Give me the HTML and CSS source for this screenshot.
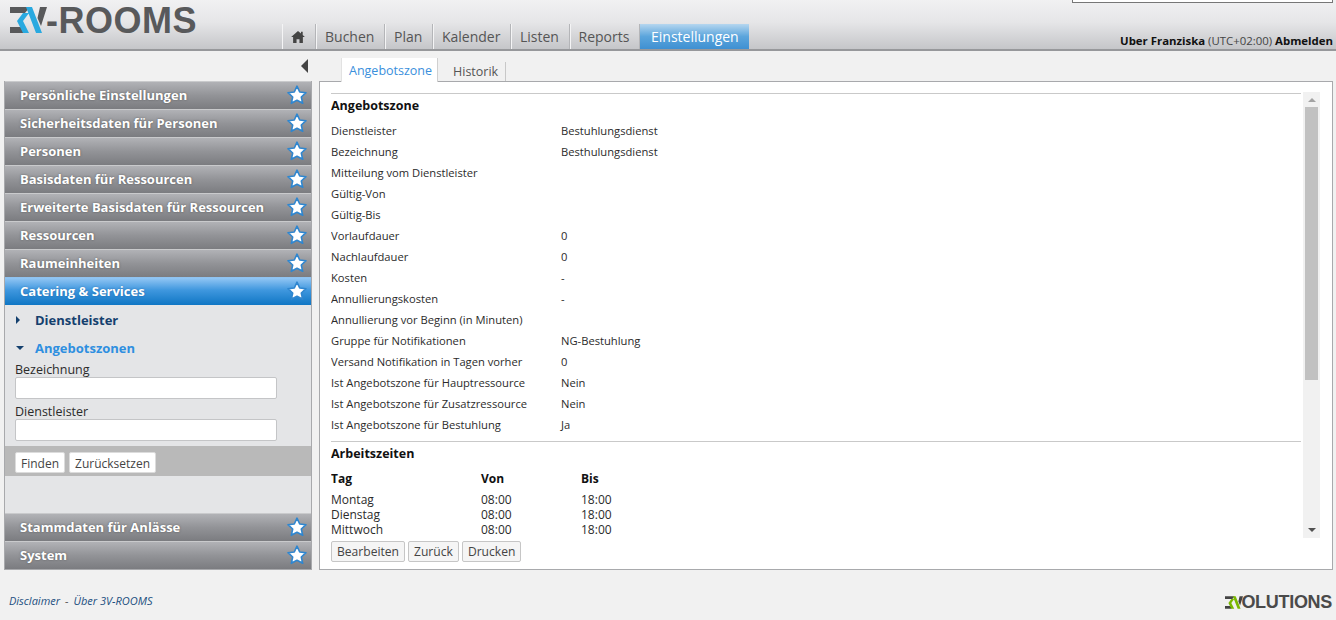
FILE: index.html
```html
<!DOCTYPE html>
<html lang="de">
<head>
    <meta charset="UTF-8">
    <title>3V-ROOMS</title>
    <link rel="stylesheet" href="styles.css">
</head>
<body>
    <svg class="svg-defs" width="0" height="0">
        <symbol id="star" viewBox="0 0 20 20">
            <path d="M10 1.200l2.700 5.800 6.300.7-4.700 4.300 1.400 6.300L10 15.200l-5.700 3.100 1.400-6.300L1 7.700l6.300-.7z" fill="#fff" stroke="#2f86cf" stroke-width="1.600" stroke-linejoin="round"/>
        </symbol>
    </svg>

    <header class="top-bar">
        <div class="logo">
            <svg class="logo-mark" viewBox="0 0 37 26" width="37" height="26">
                <path d="M0 0h20l-5 6H0zM0 20h11l3 6H0zM30 0h7l-6 19-3.500-8z" fill="#58595b"/>
                <path d="M13 6h6l-6 8 6 12h-6L7 14zM16 0h6l10 26h-6z" fill="#29a9e0"/>
            </svg>
            <span class="logo-text">-ROOMS</span>
        </div>
        <nav class="main-nav">
            <a class="nav-tab nav-home">
                <svg viewBox="0 0 16 14" width="14" height="12"><path d="M8 0L0 7h2.300v7h4V9.500h3.400V14h4V7H16l-2.500-2.200V1h-2v2z" fill="#444"/></svg>
            </a>
            <a class="nav-tab">Buchen</a>
            <a class="nav-tab">Plan</a>
            <a class="nav-tab">Kalender</a>
            <a class="nav-tab">Listen</a>
            <a class="nav-tab">Reports</a>
            <a class="nav-tab nav-active">Einstellungen</a>
        </nav>
        <div class="top-right">
            <div class="search-box"></div>
            <div class="user-line"><b>Uber Franziska</b> (UTC+02:00) <b>Abmelden</b></div>
        </div>
    </header>

    <div class="page">
        <aside class="sidebar-wrap">
            <div class="collapse-row"><span class="collapse-arrow"></span></div>
            <div class="sidebar">
                <div class="acc-head">Persönliche Einstellungen<svg class="star"><use href="#star"/></svg></div>
                <div class="acc-head">Sicherheitsdaten für Personen<svg class="star"><use href="#star"/></svg></div>
                <div class="acc-head">Personen<svg class="star"><use href="#star"/></svg></div>
                <div class="acc-head">Basisdaten für Ressourcen<svg class="star"><use href="#star"/></svg></div>
                <div class="acc-head">Erweiterte Basisdaten für Ressourcen<svg class="star"><use href="#star"/></svg></div>
                <div class="acc-head">Ressourcen<svg class="star"><use href="#star"/></svg></div>
                <div class="acc-head">Raumeinheiten<svg class="star"><use href="#star"/></svg></div>
                <div class="acc-head acc-open">Catering &amp; Services<svg class="star"><use href="#star"/></svg></div>
                <div class="acc-body">
                    <div class="sub-head sub-first"><span class="tri-right"></span>Dienstleister</div>
                    <div class="sub-head sub-open"><span class="tri-down"></span>Angebotszonen</div>
                    <div class="filter">
                        <label class="filter-label">Bezeichnung</label>
                        <input class="filter-input" type="text">
                        <label class="filter-label">Dienstleister</label>
                        <input class="filter-input" type="text">
                    </div>
                    <div class="filter-actions">
                        <button class="btn btn-flat">Finden</button>
                        <button class="btn btn-flat">Zurücksetzen</button>
                    </div>
                </div>
                <div class="acc-head">Stammdaten für Anlässe<svg class="star"><use href="#star"/></svg></div>
                <div class="acc-head">System<svg class="star"><use href="#star"/></svg></div>
            </div>
        </aside>

        <main class="content">
            <div class="sub-tabs">
                <a class="sub-tab sub-tab-active">Angebotszone</a>
                <a class="sub-tab">Historik</a>
            </div>
            <div class="panel">
                <div class="panel-scroll">
                    <div class="scroll-content">
                        <h2 class="section-title">Angebotszone</h2>
                        <div class="row"><span class="key">Dienstleister</span><span>Bestuhlungsdienst</span></div>
                        <div class="row"><span class="key">Bezeichnung</span><span>Besthulungsdienst</span></div>
                        <div class="row"><span class="key">Mitteilung vom Dienstleister</span></div>
                        <div class="row"><span class="key">Gültig-Von</span></div>
                        <div class="row"><span class="key">Gültig-Bis</span></div>
                        <div class="row"><span class="key">Vorlaufdauer</span><span>0</span></div>
                        <div class="row"><span class="key">Nachlaufdauer</span><span>0</span></div>
                        <div class="row"><span class="key">Kosten</span><span>-</span></div>
                        <div class="row"><span class="key">Annullierungskosten</span><span>-</span></div>
                        <div class="row"><span class="key">Annullierung vor Beginn (in Minuten)</span></div>
                        <div class="row"><span class="key">Gruppe für Notifikationen</span><span>NG-Bestuhlung</span></div>
                        <div class="row"><span class="key">Versand Notifikation in Tagen vorher</span><span>0</span></div>
                        <div class="row"><span class="key">Ist Angebotszone für Hauptressource</span><span>Nein</span></div>
                        <div class="row"><span class="key">Ist Angebotszone für Zusatzressource</span><span>Nein</span></div>
                        <div class="row"><span class="key">Ist Angebotszone für Bestuhlung</span><span>Ja</span></div>
                        <h2 class="section-title section-second">Arbeitszeiten</h2>
                        <div class="hours hours-head"><span>Tag</span><span>Von</span><span>Bis</span></div>
                        <div class="hours"><span>Montag</span><span>08:00</span><span>18:00</span></div>
                        <div class="hours"><span>Dienstag</span><span>08:00</span><span>18:00</span></div>
                        <div class="hours"><span>Mittwoch</span><span>08:00</span><span>18:00</span></div>
                    </div>
                    <div class="scrollbar">
                        <span class="arrow-up"></span>
                        <div class="scroll-track"><div class="scroll-thumb"></div></div>
                        <span class="arrow-down"></span>
                    </div>
                </div>
                <div class="panel-actions">
                    <button class="btn">Bearbeiten</button>
                    <button class="btn">Zurück</button>
                    <button class="btn">Drucken</button>
                </div>
            </div>
        </main>
    </div>

    <footer class="footer">
        <div class="footer-links"><a>Disclaimer</a><span class="sep">-</span><a>Über 3V-ROOMS</a></div>
        <div class="brand">
            <svg class="brand-mark" viewBox="0 0 37 26" width="18" height="13">
                <path d="M0 0h20l-5 6H0zM0 20h11l3 6H0zM30 0h7l-6 19-3.500-8z" fill="#444"/>
                <path d="M13 6h6l-6 8 6 12h-6L7 14zM16 0h6l10 26h-6z" fill="#7ab800"/>
            </svg>
            <span class="brand-text">OLUTIONS</span>
        </div>
    </footer>
</body>
</html>
```

FILE: styles.css
```css
* {
    box-sizing: border-box;
}
body {
    margin: 0;
    height: 620px;
    overflow: hidden;
    background-color: #f1f1f1;
    font-family: "Open Sans", "Noto Sans", sans-serif;
    font-size: 11px;
    color: #2b2b2b;
}
.svg-defs {
    display: block;
    height: 0;
}

/* Kopfzeile */
.top-bar {
    display: flex;
    height: 51px;
    background: linear-gradient(#f1f1f2, #e6e6e8 45%, #c5c6c9);
    border-bottom: 2px solid #97989b;
}
.logo {
    display: flex;
    align-items: flex-start;
    width: 282px;
    height: 49px;
    padding-left: 10px;
}
.logo-mark {
    flex: none;
    margin-top: 7px;
}
.logo-text {
    font-family: "Liberation Sans", sans-serif;
    font-weight: 700;
    font-size: 36px;
    line-height: 41px;
    letter-spacing: 0.5px;
    color: #58595b;
    margin-left: -1px;
}
.main-nav {
    display: flex;
    align-self: flex-end;
    height: 25px;
}
.nav-tab {
    display: flex;
    align-items: center;
    height: 25px;
    padding: 0 9.600px 0 8px;
    font-size: 14px;
    color: #555;
    border-left: 1px solid #f4f4f5;
    border-right: 1px solid #b4b5b8;
}
.nav-home {
    padding: 0 8px;
    width: 34px;
}
.nav-active {
    color: #fff;
    border: 0;
    padding: 0 10px 0 11px;
    background: linear-gradient(#b5d6ef, #5ba5dc 50%, #3f90d2);
}
.top-right {
    flex: 1;
    display: flex;
    flex-direction: column;
    align-items: flex-end;
    justify-content: space-between;
}
.search-box {
    width: 261px;
    height: 3px;
    margin-right: 3px;
    background-color: #fff;
    border: 1px solid #777;
    border-top: 0;
}
.user-line {
    padding-right: 3px;
    margin-bottom: 1px;
    font-size: 11.400px;
    color: #444;
}
.user-line b {
    color: #111;
}

/* Seitenlayout */
.page {
    display: flex;
    height: 519px;
}
.sidebar-wrap {
    width: 319px;
    padding-left: 4px;
}
.collapse-row {
    display: flex;
    justify-content: flex-end;
    align-items: center;
    height: 30px;
    padding-right: 11px;
}
.collapse-arrow {
    border-style: solid;
    border-width: 7px 7px 7px 0;
    border-color: transparent #444 transparent transparent;
}
.sidebar {
    width: 308px;
    height: 489px;
    border: 1px solid #a8a9ac;
    border-top: 0;
    display: flex;
    flex-direction: column;
}
.acc-head {
    display: flex;
    align-items: center;
    justify-content: space-between;
    flex: none;
    height: 28px;
    padding: 0 4px 2px 15px;
    font-size: 13px;
    font-weight: 700;
    color: #fff;
    background: linear-gradient(#b1b2b6, #929397 50%, #7b7c80);
    border-top: 1px solid #c9cacc;
    text-shadow: 0 0 2px rgba(60, 60, 60, 0.7);
}
.acc-open {
    background: linear-gradient(#92c6f4, #3f97de 45%, #0f76c4);
    border-top-color: #8fc2ef;
    text-shadow: 0 0 2px rgba(20, 80, 140, 0.6);
}
.star {
    width: 20px;
    height: 20px;
    flex: none;
}
.acc-body {
    flex: 1;
    display: flex;
    flex-direction: column;
    background-color: #e4e5e7;
}
.sub-head {
    display: flex;
    align-items: center;
    height: 28px;
    padding-left: 11px;
    font-size: 13px;
    font-weight: 700;
    color: #14406e;
}
.sub-first {
    margin-top: 1px;
}
.sub-open {
    color: #2e8fe0;
}
.tri-right {
    width: 5px;
    margin-right: 14px;
    border-style: solid;
    border-width: 4px 0 4px 4px;
    border-color: transparent transparent transparent #14406e;
}
.tri-down {
    margin-right: 11px;
    border-style: solid;
    border-width: 4px 4px 0;
    border-color: #14406e transparent transparent;
}
.filter {
    padding: 0 10px;
}
.filter-label {
    display: block;
    font-size: 12.500px;
    line-height: 15px;
    height: 15px;
}
.filter-input {
    display: block;
    width: 262px;
    height: 22px;
    margin: 0 0 5px;
    background-color: #fff;
    border: 1px solid #c4c5c7;
    border-radius: 2px;
}
.filter-input:last-child {
    margin-bottom: 0;
}
.filter-actions {
    display: flex;
    gap: 4px;
    height: 30px;
    margin-top: 5px;
    padding: 6px 10px 0;
    background-color: #b9b9b9;
}
.btn {
    height: 21px;
    padding: 0 5px;
    font-family: inherit;
    font-size: 12.100px;
    color: #444;
    background-color: #f5f5f5;
    border: 1px solid #c6c6c6;
    border-radius: 2px;
}
.btn-flat {
    padding-top: 1px;
    font-size: 12px;
    background-color: #fff;
    border-color: #dcdcdc;
}

/* Inhalt */
.content {
    width: 1014px;
}
.sub-tabs {
    display: flex;
    align-items: flex-end;
    height: 30px;
    padding-left: 22px;
}
.sub-tab {
    display: flex;
    align-items: center;
    height: 19px;
    padding: 0 7px;
    font-size: 12.500px;
    color: #555;
    border-right: 1px solid #c8c8c8;
}
.sub-tab-active {
    height: 24px;
    margin-bottom: -1px;
    position: relative;
    color: #3a8fdc;
    background-color: #fff;
    border-left: 1px solid #e2e2e2;
    border-right: 1px solid #d0d0d0;
    padding-right: 5px;
    margin-right: 8px;
}
.panel {
    height: 489px;
    padding: 10px 12px 8px 11px;
    background-color: #fff;
    border: 1px solid #a8a9ac;
}
.panel-scroll {
    display: flex;
    gap: 2px;
    height: 446px;
}
.scroll-content {
    flex: 1;
    overflow: hidden;
    margin-top: 1px;
    border-top: 1px solid #c9c9c9;
    min-width: 0;
}
.section-title {
    margin: 0;
    height: 26px;
    padding-top: 3px;
    font-size: 12.500px;
    line-height: 17px;
    font-weight: 700;
    color: #111;
}
.row {
    display: flex;
    height: 21px;
    line-height: 21px;
    font-size: 11.200px;
    white-space: nowrap;
}
.key {
    width: 230px;
}
.section-second {
    height: 27px;
    margin-top: 6px;
    border-top: 1px solid #c9c9c9;
}
.hours {
    display: flex;
    height: 15px;
    line-height: 15px;
    font-size: 12px;
}
.hours span {
    width: 150px;
}
.hours span:nth-child(2) {
    width: 100px;
}
.hours-head {
    height: 24px;
    line-height: 22px;
    font-weight: 700;
    color: #111;
}
.scrollbar {
    flex: none;
    display: flex;
    flex-direction: column;
    align-items: center;
    width: 17px;
    background-color: #f1f1f1;
}
.arrow-up,
.arrow-down {
    flex: none;
    margin: 6px 0;
    border-style: solid;
}
.arrow-up {
    border-width: 0 4px 4px;
    border-color: transparent transparent #a3a3a3;
}
.arrow-down {
    border-width: 4px 4px 0;
    border-color: #505050 transparent transparent;
}
.scroll-track {
    flex: 1;
    width: 13px;
}
.scroll-thumb {
    height: 273px;
    margin-top: -1px;
    background-color: #c1c1c1;
}
.panel-actions {
    display: flex;
    gap: 3px;
    margin-top: 3px;
}

/* Fusszeile */
.footer {
    display: flex;
    justify-content: space-between;
    align-items: center;
    height: 50px;
    padding: 12px 4px 0 9px;
}
.footer-links {
    margin-bottom: 2px;
    font-size: 11px;
    font-style: italic;
    color: #1c4f80;
}
.sep {
    margin: 0 5px;
    color: #666;
}
.brand {
    display: flex;
    align-items: center;
    padding-top: 2px;
}
.brand-text {
    font-family: "Liberation Sans", sans-serif;
    font-weight: 700;
    font-size: 18px;
    letter-spacing: -0.3px;
    color: #4a4a4a;
    margin-left: -2px;
}
```
